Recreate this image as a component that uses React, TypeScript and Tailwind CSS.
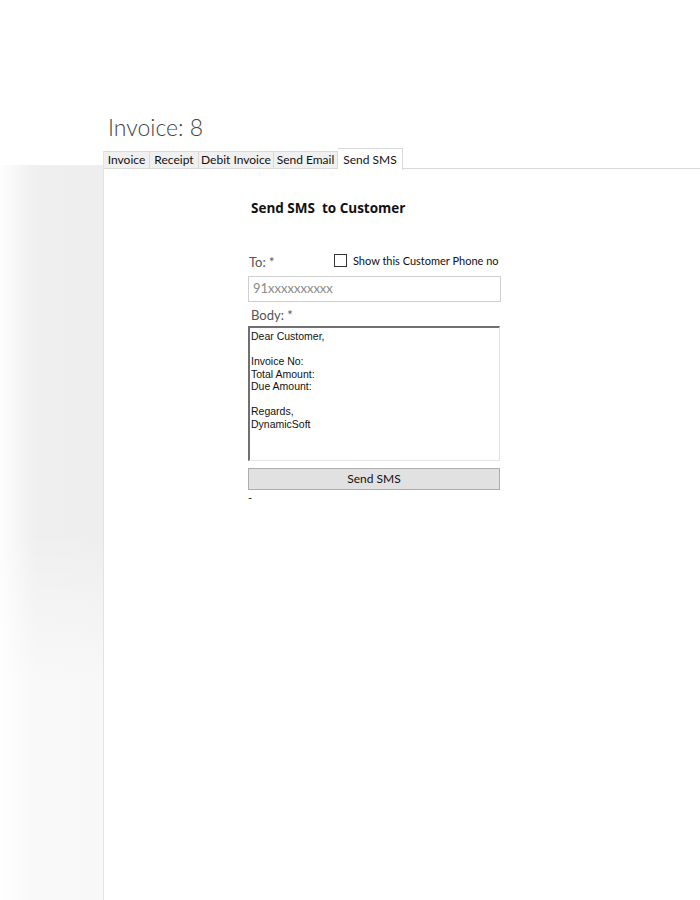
import React from "react";

const tabs = [
  { label: "Invoice", w: "w-[46px]" },
  { label: "Receipt", w: "w-[49px]" },
  { label: "Debit Invoice", w: "w-[75px]" },
  { label: "Send Email", w: "w-[64px]" },
];

export default function App() {
  return (
    <div className="w-[700px] h-[900px] bg-white flex flex-col overflow-hidden" style={{ fontFamily: 'Lato, "Noto Sans", sans-serif' }}>
      <div className="h-[151px] flex items-end pl-[108px] pb-[12px]">
        <h1 className="text-[23px] font-light text-[#444] leading-none">Invoice: 8</h1>
      </div>
      <div className="flex flex-1">
        <div className="w-[103px] flex flex-col">
          <div className="h-[14px] bg-white" />
          <div className="flex-1 bg-[linear-gradient(to_right,#fdfdfd_0%,#efefef_35%,#eeeeee_100%)]">
            <div className="h-full bg-[linear-gradient(to_bottom,rgba(255,255,255,0)_0%,rgba(255,255,255,0)_50%,rgba(255,255,255,0.6)_70%,rgba(255,255,255,0.6)_100%)]" />
          </div>
        </div>
        <div className="flex-1 flex flex-col border-l border-[#e3e3e3]">
          <div className="h-[18px] flex items-end">
            {tabs.map((t) => (
              <div
                key={t.label}
                className={`${t.w} h-[18px] flex items-center justify-center text-[12px] text-[#111] bg-[#f0f0f0] border border-[#d9d9d9] border-l-0`}
              >
                {t.label}
              </div>
            ))}
            <div className="w-[65px] h-[22px] -mb-px flex items-start justify-center pt-[2px] text-[12px] text-[#111] bg-white border border-[#d9d9d9] border-b-0 border-l-0">
              Send SMS
            </div>
            <div className="flex-1 h-[18px] border-b border-[#d9d9d9]" />
          </div>
          <div className="flex-1 pl-[144px] pt-[30px]">
            <div className="w-[253px] flex flex-col">
              <div className="pl-[3px] text-[13.5px] font-bold text-[#111] leading-[18px]" style={{ fontFamily: '"Open Sans", sans-serif' }}>Send SMS&nbsp; to Customer</div>
              <div className="mt-[34px] flex items-end h-[20px]">
                <div className="w-[86px] shrink-0 pl-[1px] text-[13px] text-[#555] leading-none pb-[2px]">To: *</div>
                <label className="flex items-center gap-[6px] text-[11px] text-[#111] leading-none mb-[4px] whitespace-nowrap">
                  <span className="w-[13px] h-[13px] shrink-0 border border-[#333] bg-white inline-block" />
                  Show this Customer Phone no
                </label>
              </div>
              <div className="mt-[5px] h-[26px] border border-[#cfcfcf] flex items-center px-[4px] text-[13px] text-[#8a8a8a]">
                91xxxxxxxxxx
              </div>
              <div className="mt-[4px] pl-[3px] text-[13px] text-[#555] leading-[18px]">Body: *</div>
              <div
                className="mt-[2px] h-[135px] w-[252px] border border-[#e3e3e3] border-t-[2px] border-l-[2px] border-t-[#707070] border-l-[#707070] pl-[1px] pt-[2px] text-[10.5px] text-[#111] leading-[12.5px] whitespace-pre"
                style={{ fontFamily: '"Liberation Sans", Arial, sans-serif' }}
              >
                {"Dear Customer,\n\nInvoice No:\nTotal Amount:\nDue Amount:\n\nRegards,\nDynamicSoft"}
              </div>
              <button className="mt-[7px] h-[22px] w-[252px] bg-[#e1e1e1] border border-[#adadad] text-[12px] text-[#111] flex items-center justify-center">
                Send SMS
              </button>
              <div className="mt-[2px] text-[11px] text-[#111] leading-none">-</div>
            </div>
          </div>
        </div>
      </div>
    </div>
  );
}
